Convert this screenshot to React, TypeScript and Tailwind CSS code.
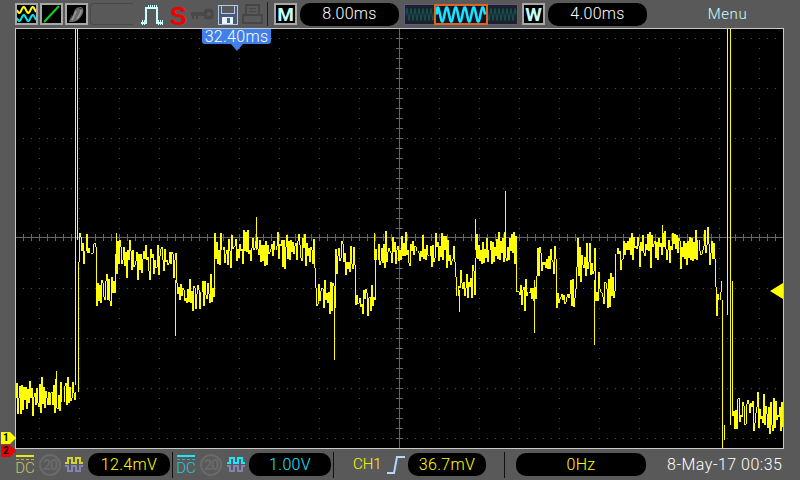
const YELLOW = "#ffff00";

// level segments of the trace, in screen pixels: [from x, to x, centre y, reach]
const segments: [number, number, number, number][] = [
  [16, 75, 398, 17],
  [78, 95, 250, 15],
  [96, 114, 291, 16],
  [115, 175, 260, 18],
  [176, 213, 294, 18],
  [214, 314, 250, 18],
  [315, 334, 295, 17],
  [335, 354, 260, 16],
  [355, 374, 300, 16],
  [375, 454, 250, 15],
  [455, 474, 287, 18],
  [475, 515, 250, 18],
  [516, 535, 295, 16],
  [536, 555, 262, 20],
  [556, 575, 298, 16],
  [576, 594, 260, 21],
  [595, 614, 291, 18],
  [615, 714, 247, 18],
  [715, 721, 296, 24],
  [732, 783, 413, 19],
];

// straight lines that stand out of the noise: [x, from y, to y]
const spikes: [number, number, number][] = [
  [75, 29, 385],
  [77, 29, 240],
  [56, 371, 395],
  [116, 233, 262],
  [175, 280, 336],
  [256, 217, 250],
  [334, 290, 360],
  [374, 233, 260],
  [475, 219, 250],
  [505, 191, 245],
  [459, 290, 312],
  [534, 280, 333],
  [594, 280, 345],
  [662, 225, 250],
  [722, 300, 448],
  [724, 425, 440],
  [727, 29, 315],
  [730, 29, 425],
];

function makeTrace() {
  let seed = 4711;
  const rnd = () => {
    seed = (seed * 16807) % 2147483647;
    return seed / 2147483647;
  };
  let d = "";
  let prev = segments[0][2];
  let up = true;
  for (const [x0, x1, cy, reach] of segments) {
    for (let x = x0; x <= x1; x++) {
      const drift = (rnd() - 0.5) * 10;
      const step = reach * Math.pow(rnd(), 1.3);
      const y = Math.round(cy + drift + (up ? -step : step));
      d += `M${x} ${prev}L${x} ${y}`;
      prev = y;
      // mostly up and down in turn, now and then twice the same way
      if (rnd() > 0.2) up = !up;
    }
  }
  for (const [x, a, b] of spikes) d += `M${x} ${a}L${x} ${b}`;
  return d;
}

function Plot() {
  const dots: React.ReactNode[] = [];
  // dotted rows every 50px, dotted columns every 40px
  for (let y = 38; y < 448; y += 50) {
    if (y === 238) continue;
    for (let x = 23; x < 783; x += 8) dots.push(<rect key={`r${y}-${x}`} x={x} y={y} width="1" height="1" />);
  }
  for (let x = 39; x < 783; x += 40) {
    if (x === 399) continue;
    for (let y = 48; y < 448; y += 10) {
      if ((y - 38) % 50 === 0) continue;
      dots.push(<rect key={`c${x}-${y}`} x={x} y={y} width="1" height="1" />);
    }
  }
  const ticks: React.ReactNode[] = [];
  for (let x = 23; x < 783; x += 8) ticks.push(<rect key={`tx${x}`} x={x} y={234} width="1" height="7" />);
  for (let y = 38; y < 448; y += 10) ticks.push(<rect key={`ty${y}`} x={396} y={y} width="7" height="1" />);

  return (
    <svg className="block w-full h-full" viewBox="16 29 767 419" shapeRendering="crispEdges">
      <rect x="16" y="29" width="767" height="419" fill="#000" />
      <g fill="#505050">{dots}</g>
      <g fill="#666666">
        {ticks}
        <rect x="16" y="237" width="767" height="1" />
        <rect x="399" y="29" width="1" height="419" />
      </g>
      <path d={makeTrace()} stroke={YELLOW} strokeWidth="1" fill="none" />
    </svg>
  );
}

function IconBox({ children }: { children: React.ReactNode }) {
  return (
    <div className="w-[23px] h-[22px] border-2 border-[#a8a8a8] bg-black flex items-center justify-center shrink-0">
      {children}
    </div>
  );
}

function Pill({ className, children }: { className: string; children: React.ReactNode }) {
  return (
    <div className={`h-[23px] rounded-[10px] bg-black flex items-center justify-center text-[16px] font-light tracking-[0.3px] leading-none shrink-0 ${className}`}>
      {children}
    </div>
  );
}

function sineWave(x0: number, x1: number, y: number, amp: number, period: number) {
  let d = `M${x0} ${y}`;
  for (let x = x0; x <= x1; x += 0.5) d += `L${x} ${(y + Math.sin((x / period) * Math.PI * 2) * amp).toFixed(1)}`;
  return d;
}

function DcIcon({ color }: { color: string }) {
  return (
    <div className="w-[18px] flex flex-col items-center shrink-0">
      <div className={`w-[18px] h-[2px] ${color === "y" ? "bg-[#e6e61e]" : "bg-[#1ee6f0]"}`} />
      <div className={`w-[18px] h-[3px] border-b border-dashed ${color === "y" ? "border-[#b4b432]" : "border-[#28b4c8]"}`} />
      <div className={`text-[15px] leading-[14px] mt-[1px] font-light ${color === "y" ? "text-[#c8c85a]" : "text-[#28c8dc]"}`}>DC</div>
    </div>
  );
}

function BwLimit() {
  return (
    <div className="w-[22px] h-[22px] rounded-full border-2 border-[#6a6a6a] flex items-center justify-center text-[14px] font-bold leading-none text-[#6a6a6a] shrink-0 tracking-[-1px]">
      20
    </div>
  );
}

function CoupleIcon({ top, bottom }: { top: string; bottom: string }) {
  return (
    <svg width="18" height="17" viewBox="0 0 18 17" className="shrink-0" fill="none" strokeWidth="1.5" shapeRendering="crispEdges">
      <path d="M0 7H3V2H7V7H11V2H15V7H18" stroke={top} />
      <path d="M0 10H3V15H7V10H11V15H15V10H18" stroke={bottom} />
    </svg>
  );
}

function Divider() {
  return <div className="w-[1px] h-[26px] bg-[#101010] shrink-0" />;
}

export default function App() {
  return (
    <div className="w-[800px] h-[480px] bg-[#595959] flex flex-col overflow-hidden font-['Roboto','Liberation_Sans',sans-serif]">
      {/* top bar */}
      <header className="h-[28px] flex items-center pl-[15px] shrink-0">
        <div className="flex gap-[2px]">
          <IconBox>
            <svg width="19" height="18" viewBox="0 0 19 18" fill="none" strokeWidth="2">
              <path d={sineWave(0, 19, 5, 3, 9)} stroke="#ffff00" />
              <path d={sineWave(0, 19, 13, 3, 9)} stroke="#00e6f0" />
            </svg>
          </IconBox>
          <IconBox>
            <svg width="19" height="18" viewBox="0 0 19 18" fill="none">
              <path d="M2 17L17 1" stroke="#14d214" strokeWidth="2" />
            </svg>
          </IconBox>
          <IconBox>
            <svg width="19" height="18" viewBox="0 0 19 18" fill="none">
              <path d="M2 17C3 12 6 12 7 7C8 3 11 2 14 2C17 3 17 7 15 10C13 13 11 16 6 17Z" fill="#6a6a6a" />
              <path d="M5 15C7 11 8 9 9 6M10 14C12 11 14 9 14 5" stroke="#9a9a9a" strokeWidth="1.5" />
              <path d="M3 14L5 10M12 3L15 4" stroke="#3c3c3c" strokeWidth="1" />
            </svg>
          </IconBox>
        </div>
        <div className="ml-[2px] w-[43px] h-[22px] rounded-tl-[4px] rounded-bl-[4px] border-l border-t border-b border-[#484848] shrink-0" />
        <div className="ml-[8px] flex items-center shrink-0">
          <svg width="22" height="21" viewBox="0 0 22 21" fill="none" stroke="#c8ffff" strokeWidth="2" shapeRendering="crispEdges">
            <path d="M0 19H5V4H16V19H22" />
            <path d="M7 1V4M9 1V4M11 1V4M13 1V4M15 1V4M1 16V21M3 16V21M17 16V21M19 16V21M21 16V21" strokeWidth="1" />
          </svg>
          <div className="ml-[7px] w-[14px] text-[25px] leading-none font-black text-[#f00000] text-center font-['Liberation_Sans',sans-serif] translate-y-[2px]">S</div>
          <svg className="ml-[7px]" width="23" height="12" viewBox="0 0 23 12" fill="#484848">
            <path d="M0 4H13V2C15 0 20 0 22 2C23 4 23 8 22 10C20 12 15 12 13 10V8H7V11H5V8H3V11H1V8H0Z" />
            <circle cx="18" cy="6" r="2" fill="#595959" />
          </svg>
          <svg className="ml-[3px]" width="21" height="21" viewBox="0 0 21 21" shapeRendering="crispEdges">
            <path d="M1 1H20V20H1Z" fill="#4a5a78" stroke="#b0c8ea" />
            <rect x="4" y="1" width="13" height="8" fill="#595959" stroke="#b0c8ea" />
            <rect x="5" y="13" width="11" height="7" fill="#e8f4ff" />
            <rect x="10" y="14" width="3" height="5" fill="#3b6a96" />
          </svg>
          <svg className="ml-[4px]" width="21" height="21" viewBox="0 0 21 21" fill="none" stroke="#464646" strokeWidth="2" shapeRendering="crispEdges">
            <path d="M4 10V1H17V10M1 11H20V19H1Z" />
            <path d="M7 4H14M7 7H14" strokeWidth="1" />
          </svg>
          <div className="ml-[4px] w-[1px] h-[24px] bg-[#202020]" />
        </div>

        <div className="ml-[6px] flex items-center shrink-0">
          <IconBox>
            <span className="text-[19px] font-bold text-[#c8ffff] leading-none">M</span>
          </IconBox>
          <Pill className="ml-[3px] w-[99px] text-white">8.00ms</Pill>
          <svg className="ml-[5px]" width="114" height="21" viewBox="0 0 114 21" fill="none">
            <rect x="0.5" y="0.5" width="113" height="20" fill="#202028" stroke="#5a5a8c" />
            <path d={sineWave(2, 112, 10.5, 6, 4)} stroke="#0f5a5a" strokeWidth="1" />
            <rect x="31" y="1" width="52" height="19" fill="#141428" stroke="#e0641e" strokeWidth="2" />
            <path d={sineWave(33, 81, 10.5, 7, 9)} stroke="#14e6ff" strokeWidth="2.5" />
          </svg>
          <div className="ml-[4px]">
            <IconBox>
              <span className="text-[19px] font-bold text-[#c8ffff] leading-none">W</span>
            </IconBox>
          </div>
          <Pill className="ml-[3px] w-[99px] text-white">4.00ms</Pill>
        </div>
        <div className="flex-1 text-center text-[15px] font-light text-[#c8ffff] tracking-[0.6px] pl-[8px]">Menu</div>
      </header>

      {/* screen */}
      <main className="relative ml-[15px] mr-[16px] flex-1 border border-[#c8c8c8] min-h-0">
        <Plot />
        {/* time position tag */}
        <div className="absolute left-[186px] top-0 w-[69px] h-[15px] bg-[#4080e8] rounded-b-[3px] text-white text-[16px] font-light tracking-[0.3px] leading-[15px] text-center whitespace-nowrap">
          32.40ms
          <div className="absolute left-[29px] top-[15px] w-0 h-0 border-x-[6px] border-t-[7px] border-x-transparent border-t-[#4080e8]" />
        </div>
        {/* trigger level */}
        <div className="absolute right-0 top-[254px] w-0 h-0 border-y-[8px] border-r-[13px] border-y-transparent border-r-[#ffff00]" />
        {/* channel ground markers */}
        <div className="absolute left-[-15px] top-[403px] w-[15px] h-[12px] bg-[#ffff00] text-[10px] font-bold leading-[12px] text-black pl-[2px] [clip-path:polygon(0_0,60%_0,100%_50%,60%_100%,0_100%)]">
          1
        </div>
        <div className="absolute left-[-15px] top-[416px] w-[15px] h-[12px] bg-[#f00000] text-[10px] font-bold leading-[12px] text-black pl-[2px] [clip-path:polygon(0_0,60%_0,100%_50%,60%_100%,0_100%)]">
          2
        </div>
      </main>

      {/* status bar */}
      <footer className="h-[31px] flex items-center pl-[16px] shrink-0">
        <DcIcon color="y" />
        <div className="ml-[5px]"><BwLimit /></div>
        <div className="ml-[4px]"><CoupleIcon top="#d2d232" bottom="#8282b4" /></div>
        <Pill className="ml-[5px] w-[82px] text-[#ffff00]">12.4mV</Pill>
        <div className="ml-[2px]"><Divider /></div>
        <div className="ml-[4px]"><DcIcon color="c" /></div>
        <div className="ml-[5px]"><BwLimit /></div>
        <div className="ml-[5px]"><CoupleIcon top="#1ee6ff" bottom="#8282b4" /></div>
        <Pill className="ml-[4px] w-[82px] text-[#1ee6ff]">1.00V</Pill>
        <div className="ml-[2px]"><Divider /></div>
        <span className="ml-[19px] w-[30px] text-[15px] font-light text-[#ffff00] whitespace-nowrap">CH1</span>
        <svg className="ml-[4px] shrink-0" width="18" height="20" viewBox="0 0 18 20" fill="none" stroke="#b4d7ff" strokeWidth="2">
          <path d="M0 18H7L10 2H18" />
        </svg>
        <Pill className="ml-[3px] w-[78px] text-[#ffff00]">36.7mV</Pill>
        <div className="ml-[18px]"><Divider /></div>
        <Pill className="ml-[11px] w-[130px] text-[#ffff00]">0Hz</Pill>
        <span className="ml-[21px] text-[16px] font-light tracking-[0.5px] text-white whitespace-nowrap">8-May-17 00:35</span>
      </footer>
    </div>
  );
}
